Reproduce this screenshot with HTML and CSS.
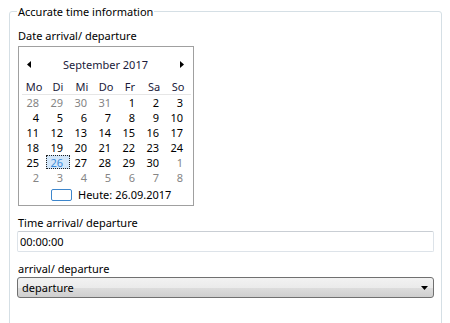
FILE: index.html
```html
<!DOCTYPE html>
<html lang="de">
<head>
  <meta charset="UTF-8" />
  <title>Accurate time information</title>
  <link rel="stylesheet" href="styles.css">
</head>
<body>
  <fieldset class="group">
    <legend>Accurate time information</legend>

    <div class="label">Date arrival/ departure</div>
    <div class="calendar">
      <div class="cal-head">
        <svg width="4" height="7" viewBox="0 0 4 7"><path d="M4 0 L0 3.5 L4 7 Z" fill="#000"/></svg>
        <span class="cal-title">September 2017</span>
        <svg width="4" height="7" viewBox="0 0 4 7"><path d="M0 0 L4 3.5 L0 7 Z" fill="#000"/></svg>
      </div>
      <div class="cal-days">
        <span>Mo</span><span>Di</span><span>Mi</span><span>Do</span><span>Fr</span><span>Sa</span><span>So</span>
      </div>
      <div class="cal-grid">
        <span class="other">28</span><span class="other">29</span><span class="other">30</span><span class="other">31</span><span>1</span><span>2</span><span>3</span>
        <span>4</span><span>5</span><span>6</span><span>7</span><span>8</span><span>9</span><span>10</span>
        <span>11</span><span>12</span><span>13</span><span>14</span><span>15</span><span>16</span><span>17</span>
        <span>18</span><span>19</span><span>20</span><span>21</span><span>22</span><span>23</span><span>24</span>
        <span>25</span><span class="selected">26</span><span>27</span><span>28</span><span>29</span><span>30</span><span class="other">1</span>
        <span class="other">2</span><span class="other">3</span><span class="other">4</span><span class="other">5</span><span class="other">6</span><span class="other">7</span><span class="other">8</span>
      </div>
      <div class="cal-today">
        <span class="today-box"></span>
        <span>Heute: 26.09.2017</span>
      </div>
    </div>

    <div class="label">Time arrival/ departure</div>
    <input class="textbox" type="text" value="00:00:00">

    <div class="label">arrival/ departure</div>
    <div class="select">
      <span>departure</span>
      <svg width="7" height="4" viewBox="0 0 7 4"><path d="M0 0 H7 L3.5 4 Z" fill="#000"/></svg>
    </div>
  </fieldset>
</body>
</html>
```

FILE: styles.css
```css
* {
  box-sizing: border-box;
}
html, body {
  margin: 0;
  padding: 0;
  background: #fff;
}
body {
  font-family: 'Noto Sans', 'Open Sans', sans-serif;
  font-size: 11px;
  line-height: 15px;
  color: #000;
}
.group {
  margin: 4px 8px 0 9px;
  padding: 0 7px 20px 7px;
  min-height: 330px;
  border: 1px solid #d5dfe5;
  border-radius: 3px;
}
.group legend {
  padding: 0 1px;
  line-height: 15px;
}
.label {
  padding-left: 1px;
  margin-top: 9px;
  height: 15px;
}
.calendar {
  width: 176px;
  height: 160px;
  margin: 3px 0 0 1px;
  padding-top: 10px;
  border: 1px solid #a0a0a0;
}
.cal-head {
  display: flex;
  align-items: center;
  justify-content: space-between;
  height: 15px;
  padding: 0 9px 0 8px;
  color: #1a1a3a;
}
.cal-days {
  display: grid;
  grid-template-columns: repeat(7, 24px);
  margin: 7px 2px 0 3px;
  height: 16px;
  border-bottom: 1px solid #e6e6e6;
  color: #1a1a3a;
}
.cal-days span {
  text-align: center;
  line-height: 15px;
}
.cal-grid {
  display: grid;
  grid-template-columns: repeat(7, 24px);
  grid-auto-rows: 15px;
  margin: 0 2px 0 3px;
}
.cal-grid span {
  text-align: right;
  padding-right: 7px;
  line-height: 15px;
}
.cal-grid .other {
  color: #858585;
}
.cal-grid .selected {
  height: 14px;
  line-height: 13px;
  background: #d3e7fa;
  border: 1px dotted #222;
  padding-right: 6px;
  color: #3a8ad8;
}
.cal-today {
  display: flex;
  align-items: center;
  gap: 6px;
  margin: 2px 0 0 32px;
  height: 15px;
}
.today-box {
  width: 21px;
  height: 12px;
  border: 1px solid #3d86cc;
  border-radius: 2px;
}
.textbox {
  display: block;
  width: 100%;
  height: 21px;
  margin-top: 1px;
  padding: 0 2px;
  font: inherit;
  color: #000;
  border: 1px solid #dde3e9;
  border-top-color: #c9ced4;
  border-radius: 2px;
  outline: none;
}
.select {
  display: flex;
  align-items: center;
  justify-content: space-between;
  height: 21px;
  margin-top: 1px;
  padding: 0 5px 0 4px;
  border: 1px solid #707070;
  border-radius: 3px;
  background: linear-gradient(#f2f2f2, #ebebeb 50%, #dddddd 51%, #cfcfcf);
}
```
